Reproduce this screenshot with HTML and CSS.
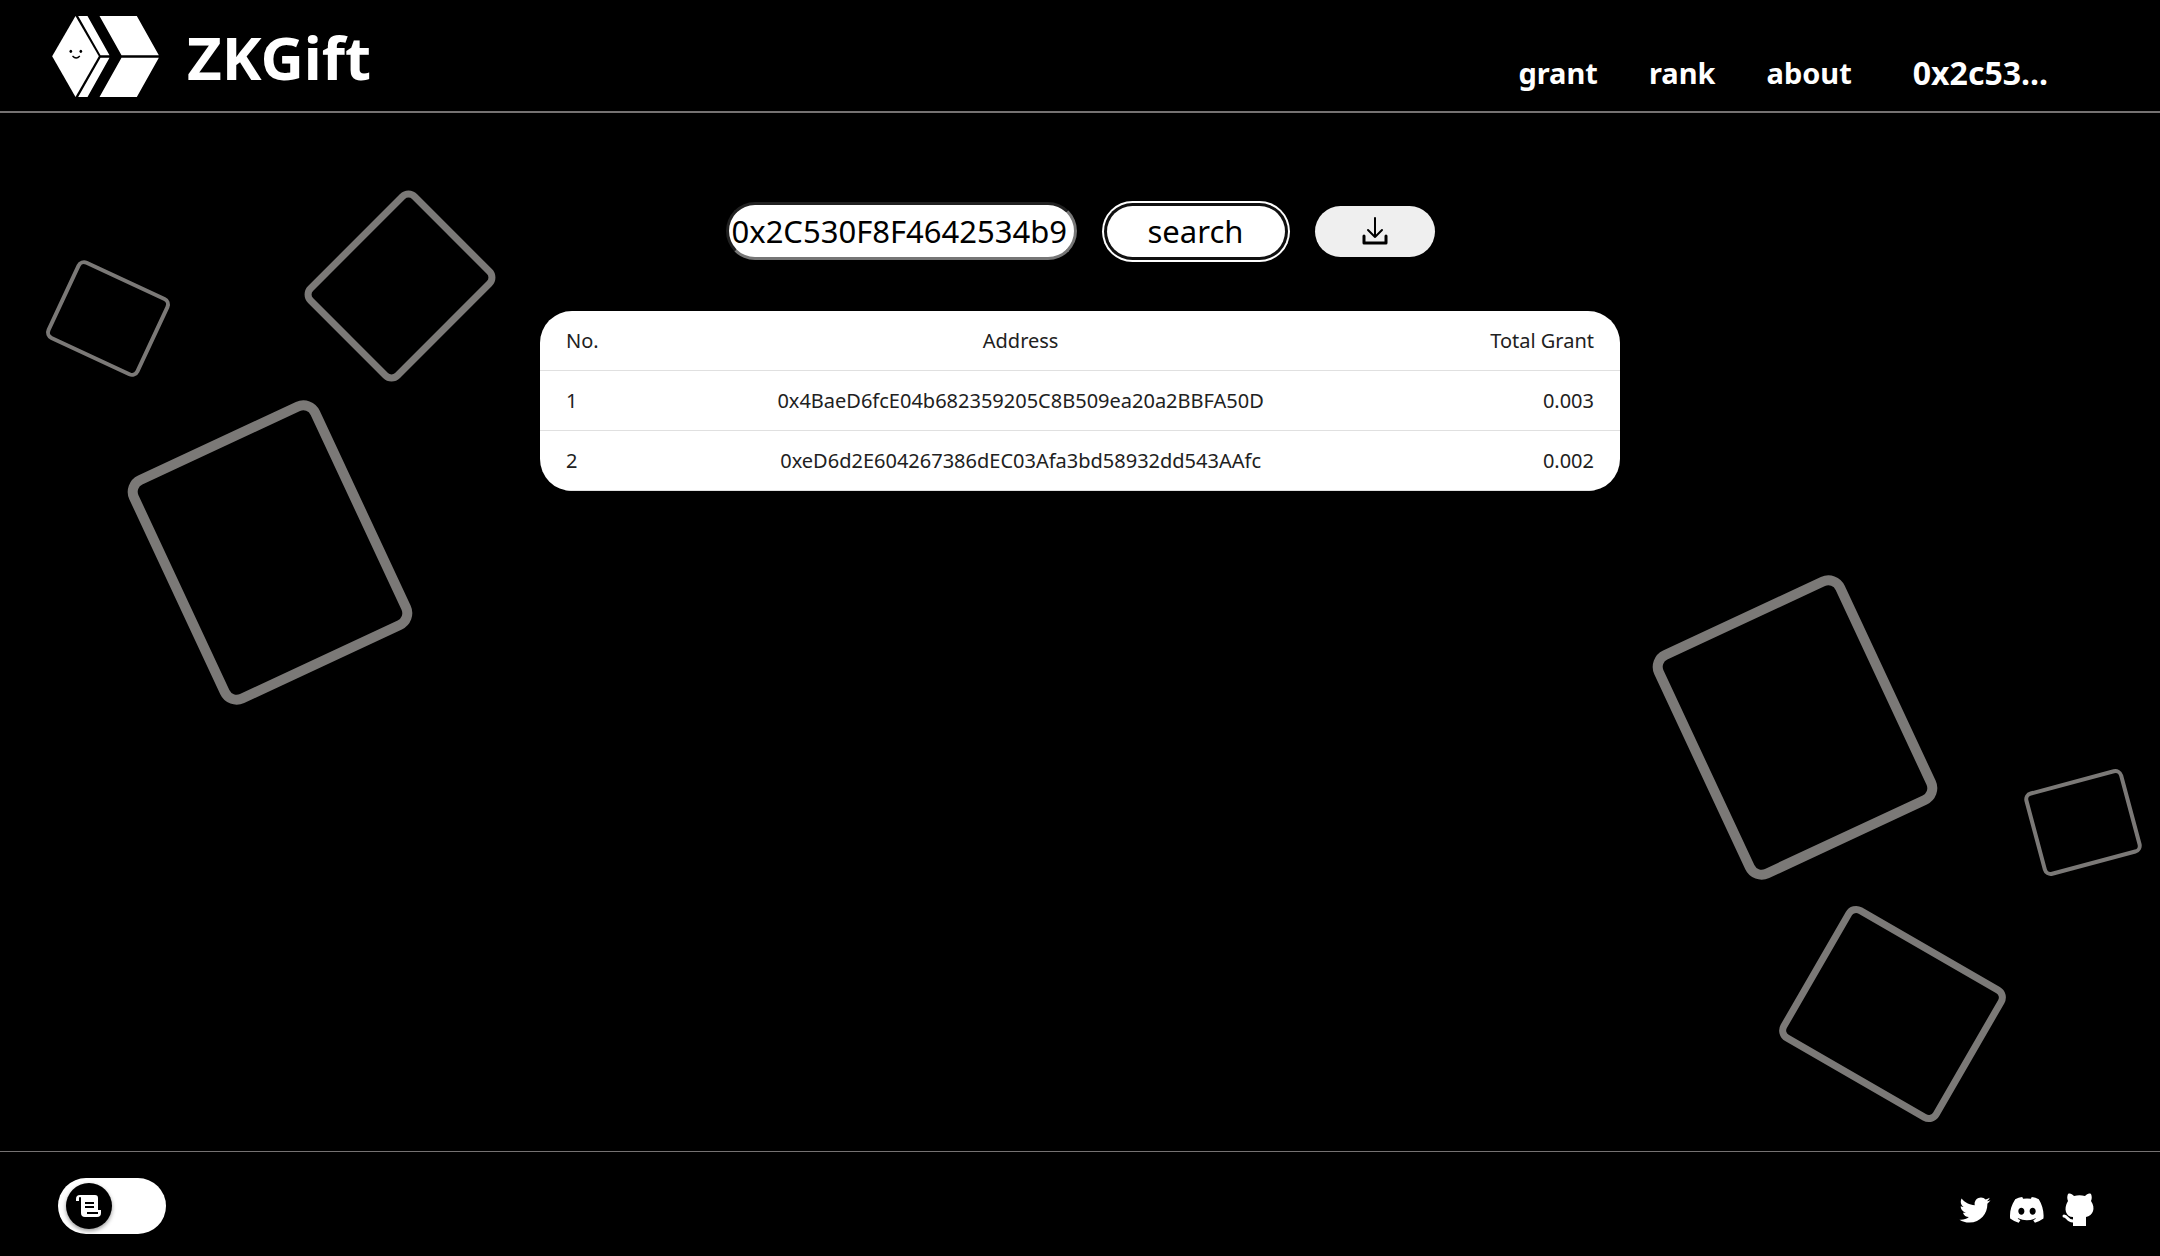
FILE: index.html
```html
<!DOCTYPE html>
<html lang="en">
<head>
<meta charset="utf-8">
<meta name="viewport" content="width=device-width, initial-scale=1">
<title>ZKGift</title>
<link rel="stylesheet" href="styles.css">
</head>
<body>
<header class="header">
  <a class="brand" href="#">
    <svg class="brand-logo" viewBox="0 0 320 243" aria-hidden="true">
      <g fill="#fff">
        <path d="M70 0 140 121 70 243 0 121z"/>
        <path d="M78 0h28l66 118h-27zM145 125h27l-66 118H78z"/>
        <path d="M142 0h112l66 118H208zM208 125h112l-66 118H142z"/>
      </g>
      <ellipse cx="56" cy="106" rx="4" ry="5"/>
      <ellipse cx="86" cy="106" rx="4" ry="5"/>
      <path d="M61 120q11 12 22 0" fill="none" stroke="#000" stroke-width="4"/>
    </svg>
    <span class="brand-name">ZKGift</span>
  </a>
  <nav class="nav">
    <a href="#">grant</a>
    <a href="#">rank</a>
    <a href="#">about</a>
    <a class="account" href="#">0x2c53...</a>
  </nav>
</header>

<main class="main">
  <div class="shapes" aria-hidden="true">
    <div class="shape small shape-a"></div>
    <div class="shape medium shape-b"></div>
    <div class="shape large shape-c"></div>
    <div class="shape large shape-d"></div>
    <div class="shape small shape-e"></div>
    <div class="shape medium shape-f"></div>
  </div>

  <form class="search">
    <input class="search-input" type="text" aria-label="Address" value="0x2C530F8F4642534b9">
    <button class="search-button" type="button">search</button>
    <button class="download-button" type="button" aria-label="Download">
      <svg viewBox="0 0 26 28" aria-hidden="true" fill="none" stroke="#000" stroke-width="2" stroke-linecap="round" stroke-linejoin="round">
        <path d="M13 1v19M6 13l7 7 7-7"/>
        <path d="M2 19v7h22v-7" stroke-width="3"/>
      </svg>
    </button>
  </form>

  <table class="grants">
    <thead>
      <tr><th class="col-no">No.</th><th class="col-address">Address</th><th class="col-total">Total Grant</th></tr>
    </thead>
    <tbody>
      <tr><td>1</td><td>0x4BaeD6fcE04b682359205C8B509ea20a2BBFA50D</td><td>0.003</td></tr>
      <tr><td>2</td><td>0xeD6d2E604267386dEC03Afa3bd58932dd543AAfc</td><td>0.002</td></tr>
    </tbody>
  </table>
</main>

<footer class="footer">
  <button class="toggle" type="button" role="switch" aria-checked="false" aria-label="Scroll network">
    <span class="knob">
      <svg viewBox="0 0 26 22" aria-hidden="true">
        <path d="M4 0h15a3 3 0 0 1 3 3v12h3v3a4 4 0 0 1-4 4H9a4 4 0 0 1-4-4V3a1 1 0 0 0-2 0v3H0V4a4 4 0 0 1 4-4z" fill="#fff"/>
        <path d="M9 8h9M9 12h9M11 18h11" stroke="#000" stroke-width="2"/>
      </svg>
    </span>
  </button>
  <div class="social">
    <a href="#" aria-label="Twitter"><svg viewBox="-24 -24 560 560" fill="#fff"><path d="M459.37 151.716c.325 4.548.325 9.097.325 13.645 0 138.72-105.583 298.558-298.558 298.558-59.452 0-114.68-17.219-161.137-47.106 8.447.974 16.568 1.299 25.34 1.299 49.055 0 94.213-16.568 130.274-44.832-46.132-.975-84.792-31.188-98.112-72.772 6.498.974 12.995 1.624 19.818 1.624 9.421 0 18.843-1.3 27.614-3.573-48.081-9.747-84.143-51.98-84.143-102.985v-1.299c13.969 7.797 30.214 12.67 47.431 13.319-28.264-18.843-46.781-51.005-46.781-87.391 0-19.492 5.197-37.36 14.294-52.954 51.655 63.675 129.3 105.258 216.365 109.807-1.624-7.797-2.599-15.918-2.599-24.04 0-57.828 46.782-104.934 104.934-104.934 30.213 0 57.502 12.67 76.67 33.137 23.715-4.548 46.456-13.32 66.599-25.34-7.798 24.366-24.366 44.833-46.132 57.827 21.117-2.273 41.584-8.122 60.426-16.243-14.292 20.791-32.161 39.308-52.628 54.253z"/></svg></a>
    <a href="#" aria-label="Discord"><svg viewBox="0 0 24 24" fill="#fff"><path d="M20.317 4.37a19.8 19.8 0 0 0-4.885-1.515.07.07 0 0 0-.079.037c-.21.375-.444.865-.608 1.25a18.3 18.3 0 0 0-5.487 0 12.6 12.6 0 0 0-.617-1.25.08.08 0 0 0-.079-.037A19.7 19.7 0 0 0 3.677 4.37C.533 9.046-.32 13.58.099 18.058a19.9 19.9 0 0 0 5.993 3.03c.462-.63.874-1.295 1.226-1.994a13 13 0 0 1-1.872-.892l.372-.292c3.928 1.793 8.18 1.793 12.062 0l.373.292a12.3 12.3 0 0 1-1.873.892c.36.698.772 1.362 1.225 1.993a19.8 19.8 0 0 0 6.002-3.03c.5-5.177-.838-9.674-3.29-13.687zM8.02 15.33c-1.183 0-2.157-1.085-2.157-2.419s.955-2.419 2.157-2.419 2.176 1.095 2.157 2.42c0 1.333-.956 2.418-2.157 2.418zm7.975 0c-1.183 0-2.157-1.085-2.157-2.419s.955-2.419 2.157-2.419 2.176 1.095 2.157 2.42c0 1.333-.946 2.418-2.157 2.418z"/></svg></a>
    <a href="#" aria-label="GitHub"><svg viewBox="0 0 34 34" fill="#fff"><path d="M6 1c2-1 4 0 6 2 4-1 7-1 11 0 2-2 4-3 6-2 1 2 1 5 0 7 5 7 2 15-5 16v9H11v-9C4 24 1 16 6 8 5 6 5 3 6 1z"/><path d="M2 23c4 0 3 6 10 5" fill="none" stroke="#fff" stroke-width="3" stroke-linecap="round"/></svg></a>
  </div>
</footer>
</body>
</html>
```
FILE: styles.css
```css
* {
  box-sizing: border-box;
}

body {
  margin: 0;
  min-height: 100vh;
  display: flex;
  flex-direction: column;
  background: #000;
  color: #fff;
  font-family: "Noto Sans", sans-serif;
}

a {
  color: inherit;
  text-decoration: none;
}

svg {
  display: block;
}

button {
  border: 0;
  padding: 0;
  color: #000;
  font-family: inherit;
}

.header {
  display: flex;
  justify-content: space-between;
  padding: 16px 112px 14px 52px;
  border-bottom: 2px solid #757272;
}

.brand {
  display: flex;
  align-items: center;
  gap: 28px;
}

.brand-logo {
  width: 107px;
  height: 81px;
}

.brand-name {
  font-size: 60px;
  line-height: 80px;
  font-weight: 700;
}

.nav {
  display: flex;
  align-items: center;
  gap: 51px;
  padding-top: 32px;
  font-size: 29px;
  line-height: 40px;
  font-weight: 700;
}

.account {
  padding-left: 10px;
  font-size: 32px;
}

.main {
  position: relative;
  flex: 1;
  display: flex;
  flex-direction: column;
  align-items: center;
  gap: 51px;
  padding: 89px 0;
  overflow: hidden;
}

.shapes {
  position: absolute;
  inset: 0;
}

.shape {
  position: absolute;
  border-style: solid;
  border-color: #7b7977;
}

.small {
  width: 102px;
  height: 87px;
  border-width: 4px;
  border-radius: 8px;
}

.medium {
  width: 130px;
  height: 154px;
  border-width: 7px;
  border-radius: 12px;
}

.large {
  width: 210px;
  height: 251px;
  border-width: 10px;
  border-radius: 18px;
}

.shape-a {
  left: 57px;
  top: 162px;
  transform: rotate(25deg);
}

.shape-b {
  left: 335px;
  top: 96px;
  transform: rotate(45deg);
}

.shape-c {
  left: 165px;
  top: 314px;
  transform: rotate(-25deg);
}

.shape-d {
  right: 260px;
  top: 489px;
  transform: rotate(-25deg);
}

.shape-e {
  right: 26px;
  top: 666px;
  transform: rotate(-15deg);
}

.shape-f {
  right: 176px;
  top: 824px;
  width: 183px;
  transform: rotate(30deg);
}

.search {
  position: relative;
  display: flex;
  align-items: center;
  gap: 30px;
}

.search-input {
  width: 351px;
  height: 58px;
  padding: 0 3px;
  border: 3px inset #767676;
  border-radius: 30px;
  background: #fff;
  color: #000;
  font-family: inherit;
  font-size: 31px;
}

.search-button {
  width: 178px;
  height: 51px;
  border-radius: 26px;
  background: #fff;
  box-shadow: 0 0 0 3px #101010, 0 0 0 5px #fff;
  font-size: 31px;
  line-height: 40px;
}

.download-button {
  display: flex;
  align-items: center;
  justify-content: center;
  width: 120px;
  height: 51px;
  border-radius: 26px;
  background: #efefef;
}

.download-button svg {
  width: 26px;
  height: 28px;
}

.grants {
  position: relative;
  width: 50%;
  table-layout: fixed;
  border-spacing: 0;
  border-radius: 32px;
  background: #fff;
  color: #212121;
  font-size: 20px;
  line-height: 27px;
  overflow: hidden;
}

.grants th,
.grants td {
  padding: 16px 26px;
  border-bottom: 1px solid #e0e0e0;
  font-weight: 400;
  text-align: center;
}

.grants th:first-child,
.grants td:first-child {
  text-align: left;
}

.grants th:last-child,
.grants td:last-child {
  text-align: right;
}

.col-no {
  width: 17%;
}

.col-address {
  width: 55%;
}

.footer {
  display: flex;
  align-items: center;
  justify-content: space-between;
  padding: 26px 64px 22px 58px;
  border-top: 1px solid #757272;
}

.toggle {
  display: flex;
  align-items: center;
  width: 108px;
  height: 56px;
  padding: 0 8px;
  border-radius: 28px;
  background: #fff;
}

.knob {
  display: flex;
  align-items: center;
  justify-content: center;
  width: 46px;
  height: 46px;
  border-radius: 50%;
  background: #000;
  box-shadow: 0 2px 4px rgba(0, 0, 0, 0.4);
}

.knob svg {
  width: 26px;
  height: 22px;
}

.social {
  display: flex;
  gap: 18px;
  padding-top: 8px;
}

.social svg {
  width: 34px;
  height: 34px;
}
```
